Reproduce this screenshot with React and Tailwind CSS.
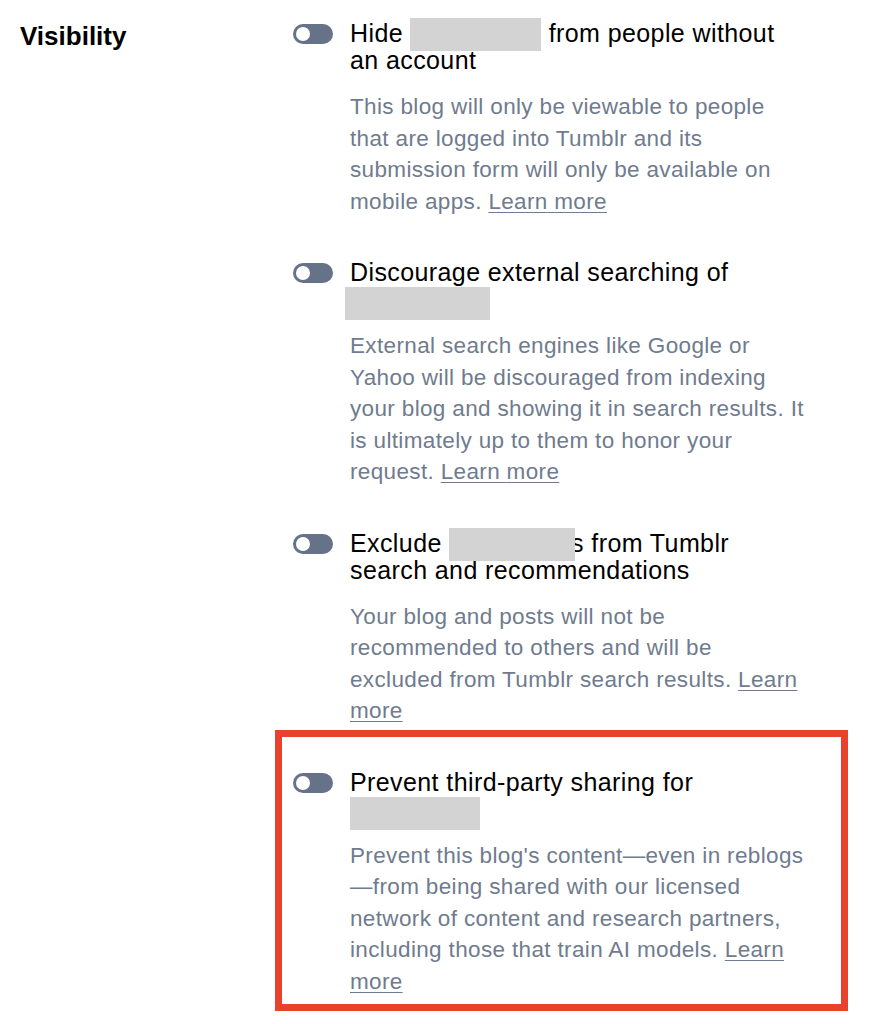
import React from "react";

const Toggle = () => (
  <div className="mt-[4px] flex h-[20px] w-[40px] shrink-0 items-center rounded-full bg-[#657287] px-[3px]">
    <div className="size-[14px] rounded-full bg-white" />
  </div>
);

// grey box that hides the blog name; margins keep the line box at 27px
const Blur = ({ className = "", margin = "-mt-[2px] -mb-[4px]" }) => (
  <span className={`relative z-10 inline-block h-[33px] bg-[#d3d3d3] align-top ${margin} ${className}`} />
);

const LearnMore = ({ split }) => (
  <a href="#" className="underline underline-offset-[3px] decoration-1">
    Learn{split ? <br /> : " "}more
  </a>
);

const Option = ({ title, children }) => (
  <div className="flex gap-[17px]">
    <Toggle />
    <div className="w-[490px]">
      <div className="text-[25px] leading-[27px] tracking-[0.4px] text-black">{title}</div>
      <p className="mt-[17px] text-[22.5px] leading-[31.5px] tracking-[0.35px] text-[#6f7b8e]">
        {children}
      </p>
    </div>
  </div>
);

export default function App() {
  return (
    <div className="min-h-[1024px] w-[893px] bg-white font-['Liberation_Sans',Arial,sans-serif]">
      <div className="flex pt-[20px] pl-[20px]">
        <h2 className="w-[273px] shrink-0 pt-[3px] text-[26px] font-bold leading-[27px] text-black">
          Visibility
        </h2>
        <div className="flex flex-col gap-[42px]">
          <Option
            title={
              <>
                Hide <Blur className="w-[131px]" /> from people without
                <br />
                an account
              </>
            }
          >
            This blog will only be viewable to people
            <br />
            that are logged into Tumblr and its
            <br />
            submission form will only be available on
            <br />
            mobile apps. <LearnMore />
          </Option>

          <Option
            title={
              <>
                Discourage external searching of
                <br />
                <Blur className="-ml-[5px] w-[145px]" margin="mt-[1px] -mb-[7px]" />
              </>
            }
          >
            External search engines like Google or
            <br />
            Yahoo will be discouraged from indexing
            <br />
            your blog and showing it in search results. It
            <br />
            is ultimately up to them to honor your
            <br />
            request. <LearnMore />
          </Option>

          <Option
            title={
              <>
                Exclude <Blur className="w-[126px]" />
                <span className="-ml-[4px]">s</span> from Tumblr
                <br />
                search and recommendations
              </>
            }
          >
            Your blog and posts will not be
            <br />
            recommended to others and will be
            <br />
            excluded from Tumblr search results. <LearnMore split />
          </Option>

          <div className="relative">
            <div className="pointer-events-none absolute -top-[39px] -bottom-[14px] -left-[18px] -right-[8px] border-[7px] border-[#e8412c]" />
            <Option
              title={
                <>
                  Prevent third-party sharing for
                  <br />
                  <Blur className="w-[130px]" margin="mt-[1px] -mb-[7px]" />
                </>
              }
            >
              Prevent this blog's content—even in reblogs
              <br />
              —from being shared with our licensed
              <br />
              network of content and research partners,
              <br />
              including those that train AI models. <LearnMore split />
            </Option>
          </div>
        </div>
      </div>
    </div>
  );
}
